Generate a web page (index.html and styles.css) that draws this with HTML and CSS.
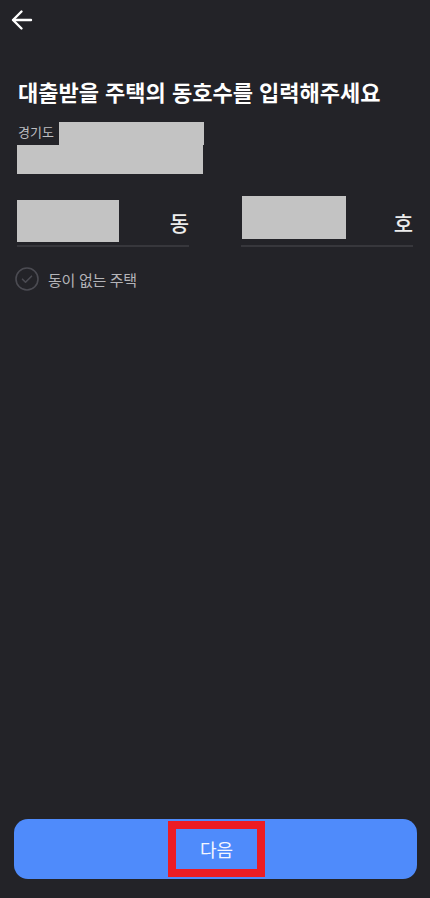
FILE: index.html
```html
<!DOCTYPE html>
<html lang="ko">
<head>
    <meta charset="UTF-8">
    <meta name="viewport" content="width=device-width, initial-scale=1.0">
    <title>동호수 입력</title>
    <link rel="stylesheet" href="styles.css">
</head>
<body>
    <div class="screen">
        <div class="top-bar">
            <button class="back-btn" aria-label="뒤로">
                <svg width="22" height="22" viewBox="0 0 22 22" fill="none" stroke="#fff" stroke-width="2.4" stroke-linecap="round" stroke-linejoin="round">
                    <path d="M20 11H2.5"/>
                    <path d="M10.5 2.5L2 11l8.5 8.5"/>
                </svg>
            </button>
        </div>

        <h1 class="title">대출받을 주택의 동호수를 입력해주세요</h1>

        <div class="address">
            <div class="address-line">
                <span class="address-text">경기도</span>
                <div class="redact redact-addr1"></div>
            </div>
            <div class="redact redact-addr2"></div>
        </div>

        <div class="fields">
            <div class="field">
                <div class="redact redact-dong"></div>
                <span class="unit">동</span>
            </div>
            <div class="field">
                <div class="redact redact-ho"></div>
                <span class="unit">호</span>
            </div>
        </div>

        <label class="no-dong">
            <svg width="24" height="24" viewBox="0 0 24 24" fill="none" stroke="#4b4b52" stroke-width="1.6" stroke-linecap="round" stroke-linejoin="round">
                <circle cx="12" cy="12" r="11"/>
                <path d="M7.5 12.2l3 3 6-6"/>
            </svg>
            <span>동이 없는 주택</span>
        </label>

        <div class="bottom">
            <button class="next-btn"><span class="next-label">다음</span></button>
        </div>
    </div>
</body>
</html>
```

FILE: styles.css
```css
body {
    margin: 0;
    padding: 0;
    background-color: #232328;
    font-family: "Noto Sans CJK KR", "Noto Sans", sans-serif;
    color: #fff;
}

.screen {
    display: flex;
    flex-direction: column;
    height: 100vh;
    box-sizing: border-box;
}

.top-bar {
    height: 40px;
    display: flex;
    align-items: center;
    padding-left: 11px;
}

.back-btn {
    background: none;
    border: none;
    padding: 0;
    display: flex;
}

.title {
    margin: 37px 0 0 18px;
    font-size: 22px;
    font-weight: 700;
    letter-spacing: 0;
    line-height: 28px;
    color: #fff;
}

.redact {
    background-color: #c3c3c3;
}

.address {
    margin: 17px 0 0 17px;
}

.address-line {
    display: flex;
    align-items: flex-end;
}

.address-text {
    font-size: 13px;
    line-height: 18px;
    color: #bdbdc0;
    width: 41px;
    padding-left: 1px;
    margin-bottom: 4px;
}

.redact-addr1 {
    width: 145px;
    height: 23px;
}

.redact-addr2 {
    width: 186px;
    height: 29px;
}

.fields {
    display: flex;
    justify-content: space-between;
    padding: 0 17px;
    margin-top: 22px;
}

.field {
    width: 172px;
    display: flex;
    justify-content: space-between;
    align-items: flex-end;
    border-bottom: 2px solid #37373c;
    padding-bottom: 3px;
}

.redact-dong {
    width: 102px;
    height: 42px;
}

.redact-ho {
    width: 104px;
    height: 43px;
    margin-left: 1px;
    margin-bottom: 3px;
}

.unit {
    font-size: 21px;
    font-weight: 500;
    line-height: 28px;
    color: #ececec;
    margin-bottom: 6px;
}

.no-dong {
    display: flex;
    align-items: center;
    gap: 9px;
    margin: 20px 0 0 15px;
    font-size: 15px;
    color: #b4b4b8;
    letter-spacing: -0.3px;
}

.bottom {
    margin-top: auto;
    padding: 0 13px 19px 14px;
}

.next-btn {
    width: 100%;
    height: 60px;
    border: none;
    border-radius: 14px;
    background-color: #4f8bfb;
    display: flex;
    justify-content: center;
    align-items: center;
    padding: 0;
    font-family: inherit;
}

.next-label {
    display: flex;
    justify-content: center;
    align-items: center;
    width: 97px;
    height: 56px;
    box-sizing: border-box;
    border: 8px solid #ec1c24;
    margin-left: 2px;
    font-size: 18px;
    color: #f4f6ff;
}
```
